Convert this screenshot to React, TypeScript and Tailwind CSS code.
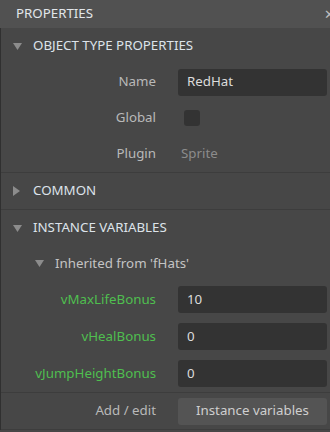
import React from "react";

const Down = () => (
  <svg width="9" height="7" viewBox="0 0 9 7">
    <polygon points="0,0 9,0 4.5,7" fill="#8c8c8c" />
  </svg>
);
const Right = () => (
  <svg width="7" height="10" viewBox="0 0 7 10">
    <polygon points="0,0 7,5 0,10" fill="#8c8c8c" />
  </svg>
);

const Section = ({ open, title }: { open: boolean; title: string }) => (
  <div className="h-[36px] flex items-center pl-[12px]">
    <div className="w-[20px] flex items-center">{open ? <Down /> : <Right />}</div>
    <span className="text-[13.3px] text-[#dde3ea]">{title}</span>
  </div>
);

const Row = ({
  label,
  green,
  tall,
  children,
}: {
  label: string;
  green?: boolean;
  tall?: boolean;
  children: React.ReactNode;
}) => (
  <div className={`${tall ? "h-[37px]" : "h-[36px]"} flex items-center`}>
    <div
      className={`w-[155px] text-right text-[13.3px] ${green ? "text-[#4fbf4f]" : "text-[#b9b9b9]"}`}
    >
      {label}
    </div>
    <div className="ml-[22px] w-[149px] flex items-center">{children}</div>
  </div>
);

const Input = ({ v }: { v: string }) => (
  <div className="h-[27px] w-full rounded-[3px] bg-[#333333] flex items-center pl-[9px] text-[13.3px] text-[#dcdcdc]">
    {v}
  </div>
);

export default function App() {
  return (
    <div
      className="w-[330px] h-[432px] bg-[#474747] overflow-hidden relative"
      style={{ fontFamily: '"Noto Sans", "Open Sans", sans-serif' }}
    >
      <div className="h-[28px] bg-[#515151] flex items-center pl-[16px] relative">
        <span className="text-[13.3px] text-[#e2e6ea]">PROPERTIES</span>
        <span className="absolute left-[324px] top-[5px] text-[13px] text-[#bdbdbd]">✕</span>
      </div>
      <div className="border-l border-[#303030]">
        <Section open title="OBJECT TYPE PROPERTIES" />
        <Row label="Name">
          <Input v="RedHat" />
        </Row>
        <Row label="Global">
          <div className="ml-[6px] w-[16px] h-[16px] rounded-[3px] bg-[#333333]" />
        </Row>
        <Row label="Plugin">
          <span className="pl-[3px] text-[13.3px] text-[#8c8c8c]">Sprite</span>
        </Row>
        <div className="h-px bg-[#3d3d3d]" />
        <Section open={false} title="COMMON" />
        <div className="h-px bg-[#3d3d3d]" />
        <Section open title="INSTANCE VARIABLES" />
        <div className="h-[35px] flex items-center pl-[34px]">
          <div className="w-[20px] flex items-center">
            <Down />
          </div>
          <span className="text-[13.3px] text-[#c4c4c4]">Inherited from 'fHats'</span>
        </div>
        <Row label="vMaxLifeBonus" green tall>
          <Input v="10" />
        </Row>
        <Row label="vHealBonus" green tall>
          <Input v="0" />
        </Row>
        <Row label="vJumpHeightBonus" green tall>
          <Input v="0" />
        </Row>
        <div className="h-px bg-[#3d3d3d]" />
        <Row label="Add / edit">
          <div className="h-[27px] w-full rounded-[3px] bg-[#545454] flex items-center justify-center text-[13.3px] text-[#cfcfcf]">
            Instance variables
          </div>
        </Row>
        <div className="h-px bg-[#3d3d3d]" />
      </div>
    </div>
  );
}
